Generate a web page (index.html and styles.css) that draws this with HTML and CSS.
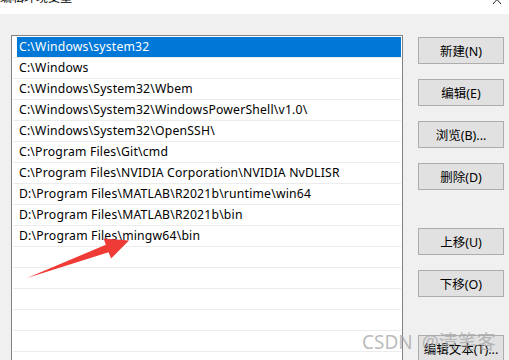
FILE: index.html
```html
<!DOCTYPE html>
<html lang="zh-CN">
<head>
    <meta charset="UTF-8">
    <title>编辑环境变量</title>
    <link rel="stylesheet" href="styles.css">
</head>
<body>
    <div class="titlebar">
        <span class="title">编辑环境变量</span>
        <svg class="close" width="10" height="6" viewBox="0 0 10 6">
            <path d="M1 5 L5 0.5 L9 5" fill="none" stroke="#222" stroke-width="1"/>
        </svg>
    </div>

    <div class="dialog">
        <div class="path-list">
            <div class="row selected"><span>C:\Windows\system32</span></div>
            <div class="row"><span>C:\Windows</span></div>
            <div class="row"><span>C:\Windows\System32\Wbem</span></div>
            <div class="row"><span>C:\Windows\System32\WindowsPowerShell\v1.0\</span></div>
            <div class="row"><span>C:\Windows\System32\OpenSSH\</span></div>
            <div class="row"><span>C:\Program Files\Git\cmd</span></div>
            <div class="row"><span>C:\Program Files\NVIDIA Corporation\NVIDIA NvDLISR</span></div>
            <div class="row"><span>D:\Program Files\MATLAB\R2021b\runtime\win64</span></div>
            <div class="row"><span>D:\Program Files\MATLAB\R2021b\bin</span></div>
            <div class="row"><span>D:\Program Files\mingw64\bin</span></div>
            <div class="row"></div>
            <div class="row"></div>
            <div class="row"></div>
            <div class="row"></div>
            <div class="row"></div>
            <div class="row"></div>
        </div>

        <div class="actions">
            <button>新建(N)</button>
            <button>编辑(E)</button>
            <button>浏览(B)...</button>
            <button>删除(D)</button>
            <button class="spaced">上移(U)</button>
            <button>下移(O)</button>
            <button class="spaced">编辑文本(T)...</button>
        </div>
    </div>

    <!-- annotation arrow pasted on the screenshot -->
    <svg class="arrow" width="509" height="360" viewBox="0 0 509 360">
        <polygon points="27,278 105.8,244.8 103.6,238.6 129,240.5 111.1,258.6 108.6,252.2" fill="#ef3b36"/>
    </svg>

    <div class="watermark">CSDN @清笔客</div>
</body>
</html>
```

FILE: styles.css
```css
body {
    margin: 0;
    width: 509px;
    height: 360px;
    overflow: hidden;
    position: relative;
    font-family: "Noto Sans", "Noto Sans CJK SC", sans-serif;
    font-size: 12px;
    color: #000;
    background: #f0f0f0;
}

.titlebar {
    height: 14px;
    background: #fff;
    overflow: hidden;
    display: flex;
    justify-content: space-between;
    align-items: flex-start;
}

.titlebar .title {
    font-size: 12px;
    line-height: 12px;
    margin-top: -8px;
}

.titlebar .close {
    margin-right: 7px;
    margin-top: -1px;
}

.dialog {
    height: 346px;
    padding: 21px 0 0 11px;
    box-sizing: border-box;
    display: flex;
    align-items: flex-start;
    overflow: hidden;
}

.path-list {
    width: 392px;
    height: 360px;
    flex-shrink: 0;
    box-sizing: border-box;
    border: 1px solid #828282;
    background: #fff;
    padding: 1px 1px 0 1px;
}

.row {
    height: 20px;
    line-height: 20px;
    border-bottom: 1px solid #ececec;
    padding-left: 4px;
    white-space: nowrap;
    font-size: 12.2px;
    letter-spacing: 0.2px;
}

.row span {
    display: block;
    padding-left: 2px;
}

.row.selected span {
    background: #0078d7;
    color: #fff;
}

.actions {
    margin-left: 15px;
    margin-top: 2px;
    display: flex;
    flex-direction: column;
    gap: 15px;
}

.actions button {
    width: 86px;
    height: 27px;
    padding: 0;
    background: #e1e1e1;
    border: 1px solid #adadad;
    font-family: "Noto Sans", "Noto Sans CJK SC", sans-serif;
    font-size: 12.5px;
    color: #000;
}

.actions button.spaced {
    margin-top: 23px;
}

.arrow {
    position: absolute;
    left: 0;
    top: 0;
    pointer-events: none;
}

.watermark {
    position: absolute;
    left: 362px;
    top: 327px;
    font-size: 19px;
    word-spacing: 4px;
    color: rgba(165, 165, 165, 0.75);
    white-space: nowrap;
}
```
